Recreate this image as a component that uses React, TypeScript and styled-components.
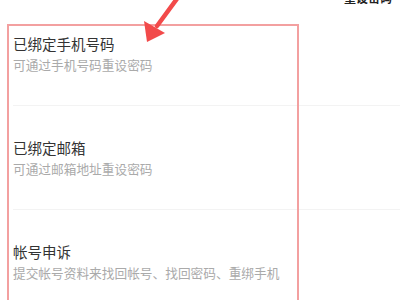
import React from "react";
import styled, { createGlobalStyle } from "styled-components";

const Global = createGlobalStyle`
  html, body { margin: 0; padding: 0; background: #fff; }
  body { font-family: "Noto Sans CJK SC", "Noto Sans", sans-serif; overflow: hidden; }
`;

const Page = styled.div`
  position: relative;
  width: 400px;
  height: 300px;
  overflow: hidden;
  background: #fff;
  display: flex;
  flex-direction: column;
`;

const Header = styled.header`
  height: 4px;
  flex-shrink: 0;
  display: flex;
  justify-content: flex-end;
  align-items: flex-end;
  padding-right: 8px;
  overflow: hidden;
`;

const HeaderText = styled.span`
  font-size: 12px;
  line-height: 12px;
  color: #222;
  font-weight: 600;
  white-space: nowrap;
  flex-shrink: 0;
`;

const List = styled.ul`
  list-style: none;
  margin: -2px 0 0 13px;
  padding: 0;
  display: flex;
  flex-direction: column;
  flex-shrink: 0;
`;

const Row = styled.li`
  height: 104px;
  padding-top: 32px;
  box-sizing: border-box;
  border-bottom: 1px solid #f3f3f3;
  display: flex;
  flex-direction: column;
  gap: 2px;
`;

const Title = styled.div`
  font-size: 14.5px;
  line-height: 20px;
  color: #333;
`;

const Desc = styled.div`
  font-size: 12.7px;
  line-height: 18px;
  color: #aaa;
`;

const Highlight = styled.div`
  position: absolute;
  left: 7px;
  top: 24px;
  width: 292px;
  height: 300px;
  border: 2px solid #f3a0a0;
  box-sizing: border-box;
  pointer-events: none;
`;

const Arrow = styled.svg`
  position: absolute;
  left: 140px;
  top: 0;
  width: 45px;
  height: 46px;
`;

const items = [
  { title: "已绑定手机号码", desc: "可通过手机号码重设密码" },
  { title: "已绑定邮箱", desc: "可通过邮箱地址重设密码" },
  { title: "帐号申诉", desc: "提交帐号资料来找回帐号、找回密码、重绑手机" },
];

export default function App() {
  return (
    <Page>
      <Global />
      <Header>
        <HeaderText>重设密码</HeaderText>
      </Header>
      <List>
        {items.map((it) => (
          <Row key={it.title}>
            <Title>{it.title}</Title>
            <Desc>{it.desc}</Desc>
          </Row>
        ))}
      </List>
      <Highlight />
      <Arrow viewBox="0 0 45 46">
        <line x1="39" y1="-4" x2="17" y2="26" stroke="#f24a4a" strokeWidth="4.5" strokeLinecap="round" />
        <polygon points="7,42 4,21 25,33" fill="#f24a4a" />
      </Arrow>
    </Page>
  );
}
